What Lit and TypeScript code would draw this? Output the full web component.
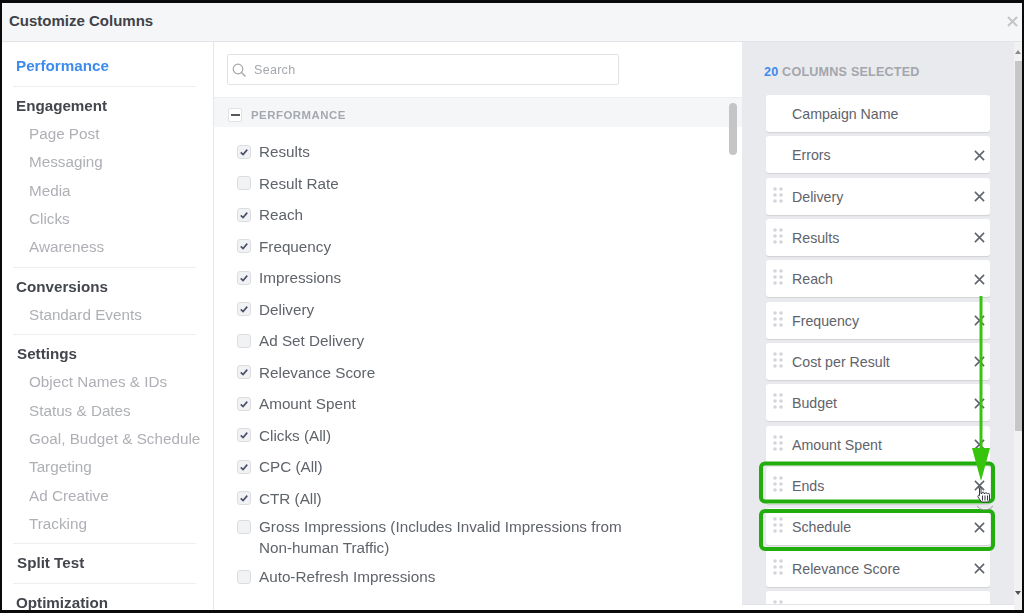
import { LitElement, html, css, svg } from "lit";
import { customElement } from "lit/decorators.js";

const NAV = [
  { h: "Performance", active: true, items: [] as string[] },
  { h: "Engagement", items: ["Page Post", "Messaging", "Media", "Clicks", "Awareness"] },
  { h: "Conversions", items: ["Standard Events"] },
  { h: "Settings", shift: true, items: ["Object Names & IDs", "Status & Dates", "Goal, Budget & Schedule", "Targeting", "Ad Creative", "Tracking"] },
  { h: "Split Test", shift: true, items: [] },
  { h: "Optimization", items: [] },
];

const ROWS: [string, boolean][] = [
  ["Results", true], ["Result Rate", false], ["Reach", true], ["Frequency", true],
  ["Impressions", true], ["Delivery", true], ["Ad Set Delivery", false], ["Relevance Score", true],
  ["Amount Spent", true], ["Clicks (All)", true], ["CPC (All)", true], ["CTR (All)", true],
];

const CARDS = ["Campaign Name", "Errors", "Delivery", "Results", "Reach", "Frequency", "Cost per Result", "Budget", "Amount Spent", "Ends", "Schedule", "Relevance Score", ""];

const xIcon = html`<svg class="x" viewBox="0 0 12 12"><path d="M1 1L11 11M11 1L1 11" fill="none" stroke="#5f636b" stroke-width="1.7"/></svg>`;
const grip = html`<svg class="grip" viewBox="0 0 10 16"><g fill="#d3d5da">${[2, 8].map((x) => [2, 8, 14].map((y) => svg`<circle cx=${x} cy=${y} r="1.8"/>`))}</g></svg>`;
const check = html`<svg class="tick" viewBox="0 0 14 14"><path d="M3.2 7.4L5.9 10L10.8 4.2" fill="none" stroke="#4b4f6b" stroke-width="1.9"/></svg>`;

@customElement("app-root")
export class AppRoot extends LitElement {
  static styles = css`
    :host { display: block; width: 1024px; height: 613px; background: #000; font-family: "Liberation Sans", Arial, sans-serif; overflow: hidden; }
    .frame { position: relative; box-sizing: border-box; width: 1024px; height: 613px; border-style: solid; border-color: #0a0a0a; border-width: 3px 2px; background: #fff; display: flex; flex-direction: column; overflow: hidden; }
    .soft { display: flex; flex-direction: column; height: 100%; filter: blur(0.55px); }
    header { height: 39px; flex: none; box-sizing: border-box; background: #f5f6f7; border-bottom: 1px solid #e3e4e7; display: flex; align-items: center; justify-content: space-between; padding: 0 4px 4px 7px; font-size: 15px; font-weight: 700; color: #3f4248; }
    .close { width: 11px; height: 11px; margin-top: 3px; }
    .body { flex: 1; display: flex; min-height: 0; }

    nav { width: 212px; flex: none; box-sizing: border-box; border-right: 1px solid #e6e7ea; padding-top: 5.5px; overflow: hidden; }
    .group { margin: 0 17px 0 11px; padding: 6px 0 5px; border-bottom: 1px solid #eceef0; }
    .group:first-child { padding: 5px 0 6px; }
    .group:last-child { border-bottom: none; }
    .group.shift .h { padding-left: 4px; }
    .h { height: 27.3px; line-height: 26.6px; white-space: nowrap; padding-left: 3px; font-size: 15.2px; font-weight: 700; color: #43464d; }
    .sub { height: 28.3px; line-height: 28.3px; white-space: nowrap; padding-left: 16px; font-size: 15.25px; color: #aeb0b5; }
    .h.active { color: #3d8bec; }

    main { width: 528px; flex: none; position: relative; overflow: hidden; }
    .searchwrap { height: 56px; box-sizing: border-box; padding: 12px 123px 0 13px; border-bottom: 1px solid #eceef0; }
    .search { height: 31px; box-sizing: border-box; border: 1px solid #e0e2e5; border-radius: 2px; display: flex; align-items: center; gap: 7px; padding-left: 3px; font-size: 12.5px; color: #a4a7ad; letter-spacing: 0.3px; }
    .search svg { width: 16px; height: 16px; flex: none; }
    .section { height: 29px; box-sizing: border-box; padding: 4px 0 0 14px; background: #f5f6f8; display: flex; align-items: center; gap: 9px; font-size: 11.4px; font-weight: 700; color: #a5a8af; letter-spacing: 0.5px; }
    .minus { width: 14px; height: 14px; box-sizing: border-box; background: #fff; border: 1px solid #e0e2e5; border-radius: 2px; display: flex; align-items: center; justify-content: center; }
    .minus i { display: block; width: 9px; height: 2px; background: #55585f; }
    .rows { padding-top: 9px; }
    .row { height: 31.5px; display: flex; align-items: center; gap: 8px; padding-left: 23px; font-size: 15.25px; color: #5f636a; }
    .row.two { height: 42px; margin-top: 2px; line-height: 21px; align-items: flex-start; }
    .row.two .box { margin-top: 4px; }
    .row.last { margin-top: 3px; }
    .box { width: 14px; height: 14px; flex: none; box-sizing: border-box; background: #f1f2f3; border: 1px solid #dcdde0; border-radius: 3px; display: block; }
    .tick { display: block; width: 12px; height: 12px; }
    .thumb { position: absolute; left: 515px; top: 61px; width: 8px; height: 52px; border-radius: 4px; background: #c4c5c7; }

    aside { flex: 1; min-width: 0; background: #e9eaed; display: flex; position: relative; }
    .panel { flex: 1; min-width: 0; display: flex; flex-direction: column; }
    .count { flex: none; height: 53px; box-sizing: border-box; padding: 23px 0 0 22px; font-size: 12.6px; font-weight: 700; color: #a3a6ad; letter-spacing: 0.2px; }
    .count b { color: #3d8bec; }
    .list { flex: 1; min-height: 0; overflow: hidden; padding-left: 24px; width: 224px; display: flex; flex-direction: column; gap: 4.33px; }
    .card { flex: none; width: 224px; height: 37px; box-sizing: border-box; background: #fff; border-radius: 3px; box-shadow: 0 1px 1px rgba(0,0,0,.1); display: flex; align-items: center; padding: 0 5px 0 7px; font-size: 14.2px; color: #5f636a; }
    .slot { width: 19px; flex: none; display: flex; }
    .grip { width: 10px; height: 16px; margin-top: -3px; }
    .name { flex: 1; margin-top: 1px; }
    .x { width: 11px; height: 11px; margin-top: 1px; }
    .foot { flex: none; height: 6px; background: #fff; border-top: 1px solid #e0e2e5; box-sizing: border-box; margin-right: -8px; position: relative; }
    .scroll { width: 8px; flex: none; background: #f1f1f1; position: relative; }
    .sthumb { position: absolute; left: 1px; right: 0; top: 19px; height: 370px; background: #c6c6c6; }
    .up, .down { position: absolute; left: 1px; width: 0; height: 0; border-left: 3px solid transparent; border-right: 3px solid transparent; }
    .up { top: 8px; border-bottom: 4px solid #8b8b8b; }
    .down { top: 549px; border-top: 4px solid #505050; }

    .overlay { position: absolute; left: -2px; top: -3px; width: 1024px; height: 613px; pointer-events: none; filter: blur(0.3px); }
  `;

  render() {
    return html`<div class="frame">
      <div class="soft">
        <header>
          <span>Customize Columns</span>
          <svg class="close" viewBox="0 0 12 12"><path d="M1 1L11 11M11 1L1 11" fill="none" stroke="#c4c6ca" stroke-width="2.2"/></svg>
        </header>
        <div class="body">
          <nav>
            ${NAV.map((g) => html`<div class="group ${g.shift ? "shift" : ""}">
              <div class="h ${g.active ? "active" : ""}">${g.h}</div>
              ${g.items.map((i) => html`<div class="sub">${i}</div>`)}
            </div>`)}
          </nav>
          <main>
            <div class="searchwrap">
              <div class="search">
                <svg viewBox="0 0 16 16"><circle cx="7" cy="7" r="4.8" fill="none" stroke="#a4a7ad" stroke-width="1.2"/><path d="M10.5 10.5L14.5 14.5" stroke="#a4a7ad" stroke-width="1.4"/></svg>
                <span>Search</span>
              </div>
            </div>
            <div class="section"><span class="minus"><i></i></span><span>PERFORMANCE</span></div>
            <div class="rows">
              ${ROWS.map(([t, c]) => html`<div class="row"><span class="box">${c ? check : ""}</span><span>${t}</span></div>`)}
              <div class="row two"><span class="box"></span><span>Gross Impressions (Includes Invalid Impressions from<br />Non-human Traffic)</span></div>
              <div class="row last"><span class="box"></span><span>Auto-Refresh Impressions</span></div>
            </div>
            <div class="thumb"></div>
          </main>
          <aside>
            <div class="panel">
              <div class="count"><b>20</b> COLUMNS SELECTED</div>
              <div class="list">
                ${CARDS.map((c, i) => html`<div class="card">
                  <span class="slot">${i > 1 ? grip : ""}</span>
                  <span class="name">${c}</span>
                  ${i > 0 && c ? xIcon : ""}
                </div>`)}
              </div>
              <div class="foot"></div>
            </div>
            <div class="scroll"><span class="up"></span><span class="sthumb"></span><span class="down"></span></div>
          </aside>
        </div>
      </div>
      <svg class="overlay" viewBox="0 0 1024 613">
        <rect x="761" y="463.5" width="232" height="38" rx="4" fill="none" stroke="#21ad0c" stroke-width="4"/>
        <rect x="761" y="511" width="232" height="38" rx="4" fill="none" stroke="#21ad0c" stroke-width="4"/>
        <path d="M981 296V450" stroke="#37c40c" stroke-width="3"/>
        <path d="M972 448H990L981 481Z" fill="#37c40c"/>
        <path d="M977 506a9 7 0 0 0 16 0" fill="none" stroke="#9a9ca1" stroke-width="1"/>
        <path d="M978.500 488c0-1.600 2.500-1.600 2.500 0V493.500h1v-.5c0-1.200 2-1.200 2 0v.5h1c0-1 2-1 2 0l.5.500c0-.9 2-.9 2 .300V499c0 1.500-.5 2.500-1 3h-7l-3.500-5c-.8-1.300.7-2.300 1.500-1.300V488Z" fill="#fff" stroke="#33363c" stroke-width="1"/>
        <path d="M982.500 495.500v5M985 495.500v5M987.500 495.500v5" stroke="#33363c" stroke-width="1"/>
      </svg>
    </div>`;
  }
}
